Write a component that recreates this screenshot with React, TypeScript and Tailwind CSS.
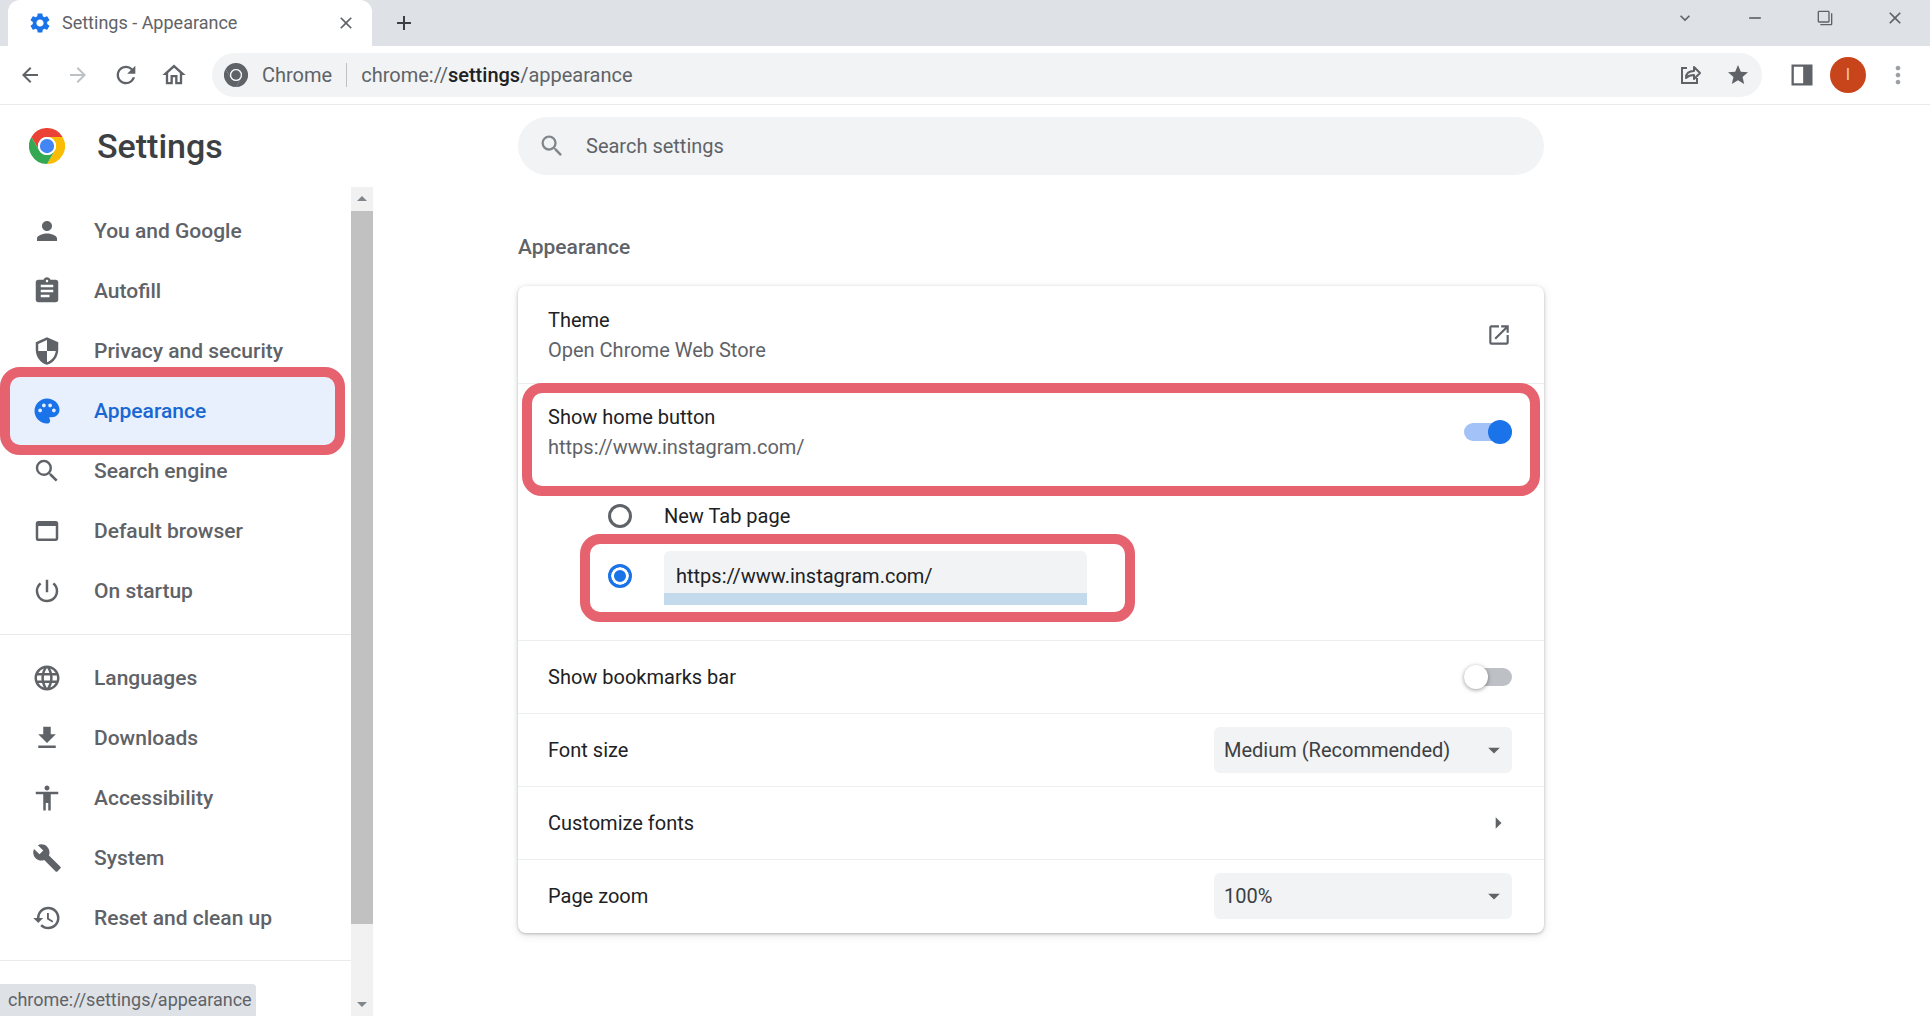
import React, { useState } from "react";
import type { IconType } from "react-icons";
import {
  MdAccessibility,
  MdAdd,
  MdArrowBack,
  MdArrowForward,
  MdArrowDropDown,
  MdArrowDropUp,
  MdArrowRight,
  MdAssignment,
  MdBuild,
  MdClose,
  MdFileDownload,
  MdFilterNone,
  MdKeyboardArrowDown,
  MdLanguage,
  MdMoreVert,
  MdOpenInNew,
  MdOutlineHome,
  MdPalette,
  MdPerson,
  MdPowerSettingsNew,
  MdRefresh,
  MdRemove,
  MdRestore,
  MdSearch,
  MdSecurity,
  MdSettings,
  MdStar,
  MdWebAsset,
} from "react-icons/md";

const primaryNav: { label: string; icon: IconType; active?: boolean }[] = [
  { label: "You and Google", icon: MdPerson },
  { label: "Autofill", icon: MdAssignment },
  { label: "Privacy and security", icon: MdSecurity },
  { label: "Appearance", icon: MdPalette, active: true },
  { label: "Search engine", icon: MdSearch },
  { label: "Default browser", icon: MdWebAsset },
  { label: "On startup", icon: MdPowerSettingsNew },
];

const advancedNav: { label: string; icon: IconType; active?: boolean }[] = [
  { label: "Languages", icon: MdLanguage },
  { label: "Downloads", icon: MdFileDownload },
  { label: "Accessibility", icon: MdAccessibility },
  { label: "System", icon: MdBuild },
  { label: "Reset and clean up", icon: MdRestore },
];

function ChromeLogo({ className, mono }: { className?: string; mono?: boolean }) {
  const c = mono
    ? ["#5f6368", "#5f6368", "#5f6368", "#5f6368", "#f1f3f4"]
    : ["#ea4335", "#fbbc04", "#34a853", "#4285f4", "#ffffff"];
  return (
    <svg viewBox="0 0 48 48" className={className} aria-hidden="true">
      <path fill={c[0]} d="M24 12h20.8A24 24 0 0 0 3.2 12l10.4 18A12 12 0 0 1 24 12z" />
      <path fill={c[1]} d="M34.4 30 24 48A24 24 0 0 0 44.8 12H24a12 12 0 0 1 10.4 18z" />
      <path fill={c[2]} d="M13.6 30 3.2 12A24 24 0 0 0 24 48l10.4-18a12 12 0 0 1-20.8 0z" />
      <circle cx="24" cy="24" r="12" fill={c[4]} />
      <circle cx="24" cy="24" r="9.5" fill={c[3]} />
    </svg>
  );
}

function ShareIcon() {
  return (
    <svg viewBox="0 0 24 24" className="size-6" fill="none" stroke="currentColor" strokeWidth="2" aria-hidden="true">
      <path d="M9 5H4v15h15v-5" />
      <path d="M8 15c0-5 3-7 8-7V4l6 6-6 6v-4c-4 0-6 1-8 3z" strokeLinejoin="round" />
    </svg>
  );
}

function SidePanelIcon() {
  return (
    <svg viewBox="0 0 24 24" className="size-7" aria-hidden="true">
      <path fill="currentColor" fillRule="evenodd" d="M3 3h18v18H3V3zm2 2v14h8V5H5z" />
    </svg>
  );
}

function IconButton({ label, className, children }: { label: string; className?: string; children: React.ReactNode }) {
  return (
    <button type="button" aria-label={label} className={"flex shrink-0 items-center justify-center " + (className ?? "")}>
      {children}
    </button>
  );
}

function Highlight({ className }: { className: string }) {
  return (
    <span
      aria-hidden="true"
      className={"pointer-events-none absolute z-10 rounded-[20px] border-[10px] border-[#e5626e] " + className}
    />
  );
}

function NavList({ items }: { items: typeof primaryNav }) {
  return (
    <ul>
      {items.map(({ label, icon: Icon, active }) => (
        <li key={label} className="relative">
          <a
            href="#"
            aria-current={active ? "page" : undefined}
            className={
              "flex h-[60px] items-center gap-8 pl-8 text-[21px] font-medium " +
              (active ? "mr-3 bg-[#e8f0fe] text-[#1967d2]" : "text-[#5f6368]")
            }
          >
            <Icon className={active ? "size-[30px] text-[#1a73e8]" : "size-[30px]"} />
            {label}
          </a>
          {active && <Highlight className="-inset-y-3.5 left-0 right-1.5 shadow-[inset_0_0_0_6px_#e8f0fe]" />}
        </li>
      ))}
    </ul>
  );
}

function Toggle({ label, initial }: { label: string; initial: boolean }) {
  const [on, setOn] = useState(initial);
  return (
    <label className="relative flex h-6 w-12 shrink-0 items-center">
      <input type="checkbox" role="switch" aria-label={label} checked={on} onChange={() => setOn(!on)} className="peer sr-only" />
      <span className="h-[18px] w-full rounded-full bg-[#bdc1c6] peer-checked:bg-[#a3c3f8]" />
      <span className="absolute left-0 size-6 rounded-full bg-white shadow-[0_1px_4px_rgba(0,0,0,0.4)] peer-checked:left-6 peer-checked:bg-[#1a73e8] peer-checked:shadow-none" />
    </label>
  );
}

function Row({ children, className }: { children: React.ReactNode; className?: string }) {
  return (
    <div className={"flex min-h-[73px] items-center justify-between border-t border-[#eceef0] pl-[30px] pr-8 " + (className ?? "")}>
      {children}
    </div>
  );
}

function Dropdown({ id, options }: { id: string; options: string[] }) {
  return (
    <div className="relative w-[298px]">
      <select id={id} className="h-[46px] w-full appearance-none rounded-md bg-[#f1f3f4] pl-2.5 pr-10 text-[#3c4043]">
        {options.map((o) => (
          <option key={o}>{o}</option>
        ))}
      </select>
      <MdArrowDropDown className="pointer-events-none absolute inset-y-0 right-1 my-auto size-7 text-[#5f6368]" />
    </div>
  );
}

export default function App() {
  const [home, setHome] = useState("url");
  const [url, setUrl] = useState("https://www.instagram.com/");

  return (
    <div className="flex h-screen flex-col overflow-hidden bg-white font-['Roboto',sans-serif] text-[20px] leading-[30px] text-[#202124]">
      <div className="flex h-[46px] shrink-0 bg-[#dee1e6] pl-2">
        <div className="flex w-[364px] items-center rounded-t-xl bg-white pl-5 pr-3.5">
          <MdSettings className="size-6 text-[#1a73e8]" />
          <span className="ml-2.5 flex-1 text-lg text-[#5f6368]">Settings - Appearance</span>
          <IconButton label="Close tab" className="size-6 text-[#5f6368]">
            <MdClose className="size-5" />
          </IconButton>
        </div>
        <IconButton label="New tab" className="ml-4 w-8 text-[#3c4043]">
          <MdAdd className="size-6" />
        </IconButton>
        <div className="ml-auto flex h-9 text-[#5f6368]">
          <IconButton label="Search tabs" className="w-[70px]"><MdKeyboardArrowDown className="size-5" /></IconButton>
          <IconButton label="Minimize" className="w-[70px]"><MdRemove className="size-5" /></IconButton>
          <IconButton label="Restore" className="w-[70px]"><MdFilterNone className="size-4 -scale-x-100" /></IconButton>
          <IconButton label="Close" className="w-[70px]"><MdClose className="size-5" /></IconButton>
        </div>
      </div>

      <div className="flex h-[59px] shrink-0 items-center border-b border-[#e8eaed] text-[#5f6368]">
        <div className="flex w-[212px] pl-1.5">
          <IconButton label="Back" className="w-12"><MdArrowBack className="size-6" /></IconButton>
          <IconButton label="Forward" className="w-12 text-[#bdc1c6]"><MdArrowForward className="size-6" /></IconButton>
          <IconButton label="Reload" className="w-12"><MdRefresh className="size-7" /></IconButton>
          <IconButton label="Home" className="w-12"><MdOutlineHome className="size-7" /></IconButton>
        </div>
        <div className="flex h-11 flex-1 items-center rounded-full bg-[#f1f3f4] pl-3 text-[20px]">
          <ChromeLogo mono className="size-6" />
          <span className="ml-3.5">Chrome</span>
          <span className="mx-3.5 h-6 w-px bg-[#bdc1c6]" />
          <span className="flex-1">
            chrome://<span className="font-medium text-[#202124]">settings</span>/appearance
          </span>
          <IconButton label="Share" className="w-12"><ShareIcon /></IconButton>
          <IconButton label="Bookmark" className="w-12"><MdStar className="size-6" /></IconButton>
        </div>
        <IconButton label="Side panel" className="ml-4 w-12"><SidePanelIcon /></IconButton>
        <button type="button" aria-label="Profile" className="ml-1 size-9 rounded-full bg-[#c8441b] text-base text-[#f6c9b8]">
          I
        </button>
        <IconButton label="Menu" className="ml-2 mr-2 w-12 text-[#9aa0a6]"><MdMoreVert className="size-7" /></IconButton>
      </div>

      <header className="flex h-[82px] shrink-0 items-center">
        <div className="flex w-[518px] shrink-0 items-center pl-[29px]">
          <ChromeLogo className="size-9" />
          <h1 className="ml-8 text-[34px] font-medium text-[#3c4043]">Settings</h1>
        </div>
        <label className="flex h-[58px] w-full max-w-[1026px] items-center rounded-full bg-[#f1f3f4] pl-5">
          <MdSearch className="size-7 text-[#80868b]" />
          <input type="search" aria-label="Search settings" placeholder="Search settings" className="ml-5 flex-1 bg-transparent outline-none placeholder:text-[#5f6368]" />
        </label>
      </header>

      <div className="flex min-h-0 flex-1">
        <nav className="w-[351px] shrink-0 overflow-hidden pt-3.5">
          <NavList items={primaryNav} />
          <hr className="my-[13px] border-[#e8eaed]" />
          <NavList items={advancedNav} />
          <hr className="my-3 border-[#e8eaed]" />
        </nav>
        <div className="flex w-[22px] shrink-0 flex-col items-center bg-[#f1f1f1] text-[#80868b]" aria-hidden="true">
          <MdArrowDropUp className="size-6" />
          <div className="w-full flex-1 bg-[#c1c1c1]" />
          <div className="h-[68px]" />
          <MdArrowDropDown className="size-6" />
        </div>

        <main className="flex-1 pl-[145px]">
          <section className="w-full max-w-[1026px] pt-[45px]">
            <h2 className="text-[21px] font-medium text-[#5f6368]">Appearance</h2>
            <div className="mt-6 rounded-lg bg-white pb-px shadow-[0_1px_3px_rgba(60,64,67,0.3),0_2px_8px_rgba(60,64,67,0.15)]">
              <a href="#" className="flex h-[97px] items-center justify-between pl-[30px] pr-8">
                <span>
                  <span className="block">Theme</span>
                  <span className="block text-[#5f6368]">Open Chrome Web Store</span>
                </span>
                <MdOpenInNew className="size-[26px] text-[#5f6368]" />
              </a>
              <div className="relative">
                <Row className="h-[97px]">
                  <span>
                    <span className="block">Show home button</span>
                    <span className="block text-[#5f6368]">{url}</span>
                  </span>
                  <Toggle label="Show home button" initial={true} />
                </Row>
                <Highlight className="top-0 -bottom-4 inset-x-1" />
              </div>
              <div className="pb-[34px] pl-[90px] pt-1.5">
                <label className="flex h-[60px] items-center gap-8">
                  <input
                    type="radio"
                    name="home"
                    checked={home === "newtab"}
                    onChange={() => setHome("newtab")}
                    className="size-6 appearance-none rounded-full border-[3px] border-[#5f6368] checked:border-[#1a73e8] checked:bg-[#1a73e8] checked:shadow-[inset_0_0_0_3px_white]"
                  />
                  New Tab page
                </label>
                <div className="relative flex h-[60px] w-fit items-center gap-8 pr-12">
                  <input
                    type="radio"
                    name="home"
                    aria-label="Custom home page address"
                    checked={home === "url"}
                    onChange={() => setHome("url")}
                    className="size-6 appearance-none rounded-full border-[3px] border-[#5f6368] checked:border-[#1a73e8] checked:bg-[#1a73e8] checked:shadow-[inset_0_0_0_3px_white]"
                  />
                  <input
                    type="text"
                    aria-label="Home page address"
                    value={url}
                    onChange={(e) => setUrl(e.target.value)}
                    className="mt-1 h-[54px] w-[423px] rounded-t-md border-b-[12px] border-[#c3d9ec] bg-[#f1f3f4] pl-3 pt-2 outline-none"
                  />
                  <Highlight className="-top-3 -bottom-4 -left-7 right-0" />
                </div>
              </div>
              <Row>
                <span>Show bookmarks bar</span>
                <Toggle label="Show bookmarks bar" initial={false} />
              </Row>
              <Row>
                <label htmlFor="font-size">Font size</label>
                <Dropdown id="font-size" options={["Medium (Recommended)", "Small", "Large"]} />
              </Row>
              <Row>
                <a href="#" className="flex-1">Customize fonts</a>
                <MdArrowRight className="size-7 text-[#5f6368]" />
              </Row>
              <Row>
                <label htmlFor="page-zoom">Page zoom</label>
                <Dropdown id="page-zoom" options={["100%", "125%", "150%"]} />
              </Row>
            </div>
          </section>
        </main>
      </div>

      <div className="fixed bottom-0 left-0 z-20 flex h-8 w-64 items-center rounded-tr bg-[#dee1e6] pl-2 text-lg text-[#5f6368]">
        chrome://settings/appearance
      </div>
    </div>
  );
}
